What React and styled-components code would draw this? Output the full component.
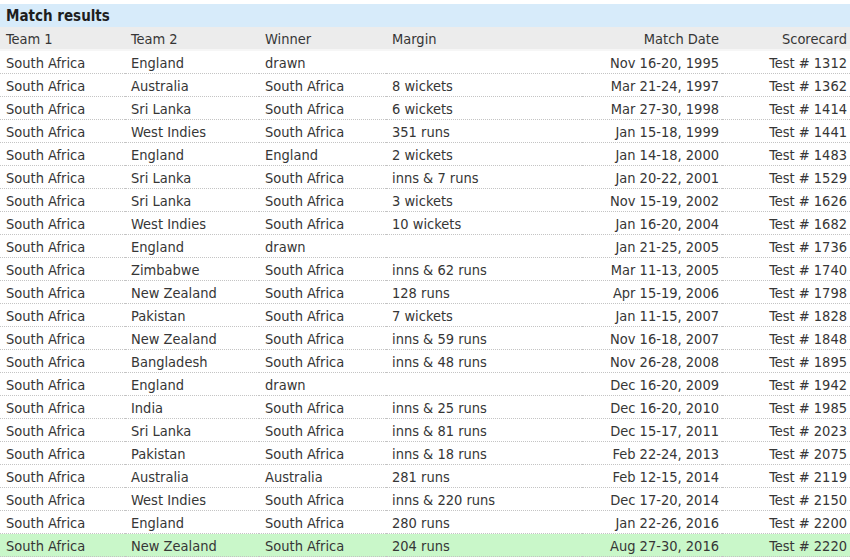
import React from "react";
import styled, { createGlobalStyle } from "styled-components";

const Global = createGlobalStyle`
  html, body { margin: 0; padding: 0; background: #fff; }
  body { font-family: "DejaVu Sans Condensed", "DejaVu Sans", Verdana, sans-serif; }
`;

const rows = [
  ["South Africa", "England", "drawn", "", "Nov 16-20, 1995", "Test # 1312"],
  ["South Africa", "Australia", "South Africa", "8 wickets", "Mar 21-24, 1997", "Test # 1362"],
  ["South Africa", "Sri Lanka", "South Africa", "6 wickets", "Mar 27-30, 1998", "Test # 1414"],
  ["South Africa", "West Indies", "South Africa", "351 runs", "Jan 15-18, 1999", "Test # 1441"],
  ["South Africa", "England", "England", "2 wickets", "Jan 14-18, 2000", "Test # 1483"],
  ["South Africa", "Sri Lanka", "South Africa", "inns & 7 runs", "Jan 20-22, 2001", "Test # 1529"],
  ["South Africa", "Sri Lanka", "South Africa", "3 wickets", "Nov 15-19, 2002", "Test # 1626"],
  ["South Africa", "West Indies", "South Africa", "10 wickets", "Jan 16-20, 2004", "Test # 1682"],
  ["South Africa", "England", "drawn", "", "Jan 21-25, 2005", "Test # 1736"],
  ["South Africa", "Zimbabwe", "South Africa", "inns & 62 runs", "Mar 11-13, 2005", "Test # 1740"],
  ["South Africa", "New Zealand", "South Africa", "128 runs", "Apr 15-19, 2006", "Test # 1798"],
  ["South Africa", "Pakistan", "South Africa", "7 wickets", "Jan 11-15, 2007", "Test # 1828"],
  ["South Africa", "New Zealand", "South Africa", "inns & 59 runs", "Nov 16-18, 2007", "Test # 1848"],
  ["South Africa", "Bangladesh", "South Africa", "inns & 48 runs", "Nov 26-28, 2008", "Test # 1895"],
  ["South Africa", "England", "drawn", "", "Dec 16-20, 2009", "Test # 1942"],
  ["South Africa", "India", "South Africa", "inns & 25 runs", "Dec 16-20, 2010", "Test # 1985"],
  ["South Africa", "Sri Lanka", "South Africa", "inns & 81 runs", "Dec 15-17, 2011", "Test # 2023"],
  ["South Africa", "Pakistan", "South Africa", "inns & 18 runs", "Feb 22-24, 2013", "Test # 2075"],
  ["South Africa", "Australia", "Australia", "281 runs", "Feb 12-15, 2014", "Test # 2119"],
  ["South Africa", "West Indies", "South Africa", "inns & 220 runs", "Dec 17-20, 2014", "Test # 2150"],
  ["South Africa", "England", "South Africa", "280 runs", "Jan 22-26, 2016", "Test # 2200"],
  ["South Africa", "New Zealand", "South Africa", "204 runs", "Aug 27-30, 2016", "Test # 2220"],
];

const Page = styled.div`
  width: 850px;
  padding-top: 4px;
  color: #363636;
  font-size: 14.5px;
`;

const Title = styled.div`
  height: 23px;
  line-height: 25px;
  background: #d7ebfa;
  font-weight: bold;
  font-size: 15px;
  padding-left: 6px;
  color: #1e1e1e;
`;

const Grid = styled.div`
  display: grid;
  grid-template-columns: 125px 134px 127px 196px 140px 128px;
`;

const Row = styled.div`
  display: contents;
`;

const Cell = styled.div`
  height: 22px;
  line-height: 24px;
  padding: ${(p) => (p.$right ? "0 3px 0 0" : "0 0 0 6px")};
  text-align: ${(p) => (p.$right ? "right" : "left")};
  white-space: nowrap;
  overflow: hidden;
  background: ${(p) => (p.$head ? "#ececec" : p.$hl ? "#c9f7c9" : "#fff")};
  border-bottom: ${(p) => (p.$head ? "2px solid #f6f6f6" : "1px dotted #c4c4c4")};
`;

const aligns = [false, false, false, false, true, true];

export default function App() {
  const head = ["Team 1", "Team 2", "Winner", "Margin", "Match Date", "Scorecard"];
  return (
    <Page>
      <Global />
      <Title>Match results</Title>
      <Grid>
        <Row>
          {head.map((h, i) => (
            <Cell key={i} $head $right={aligns[i]}>{h}</Cell>
          ))}
        </Row>
        {rows.map((r, ri) => (
          <Row key={ri}>
            {r.map((c, ci) => (
              <Cell key={ci} $right={aligns[ci]} $hl={ri === rows.length - 1}>{c}</Cell>
            ))}
          </Row>
        ))}
      </Grid>
    </Page>
  );
}
